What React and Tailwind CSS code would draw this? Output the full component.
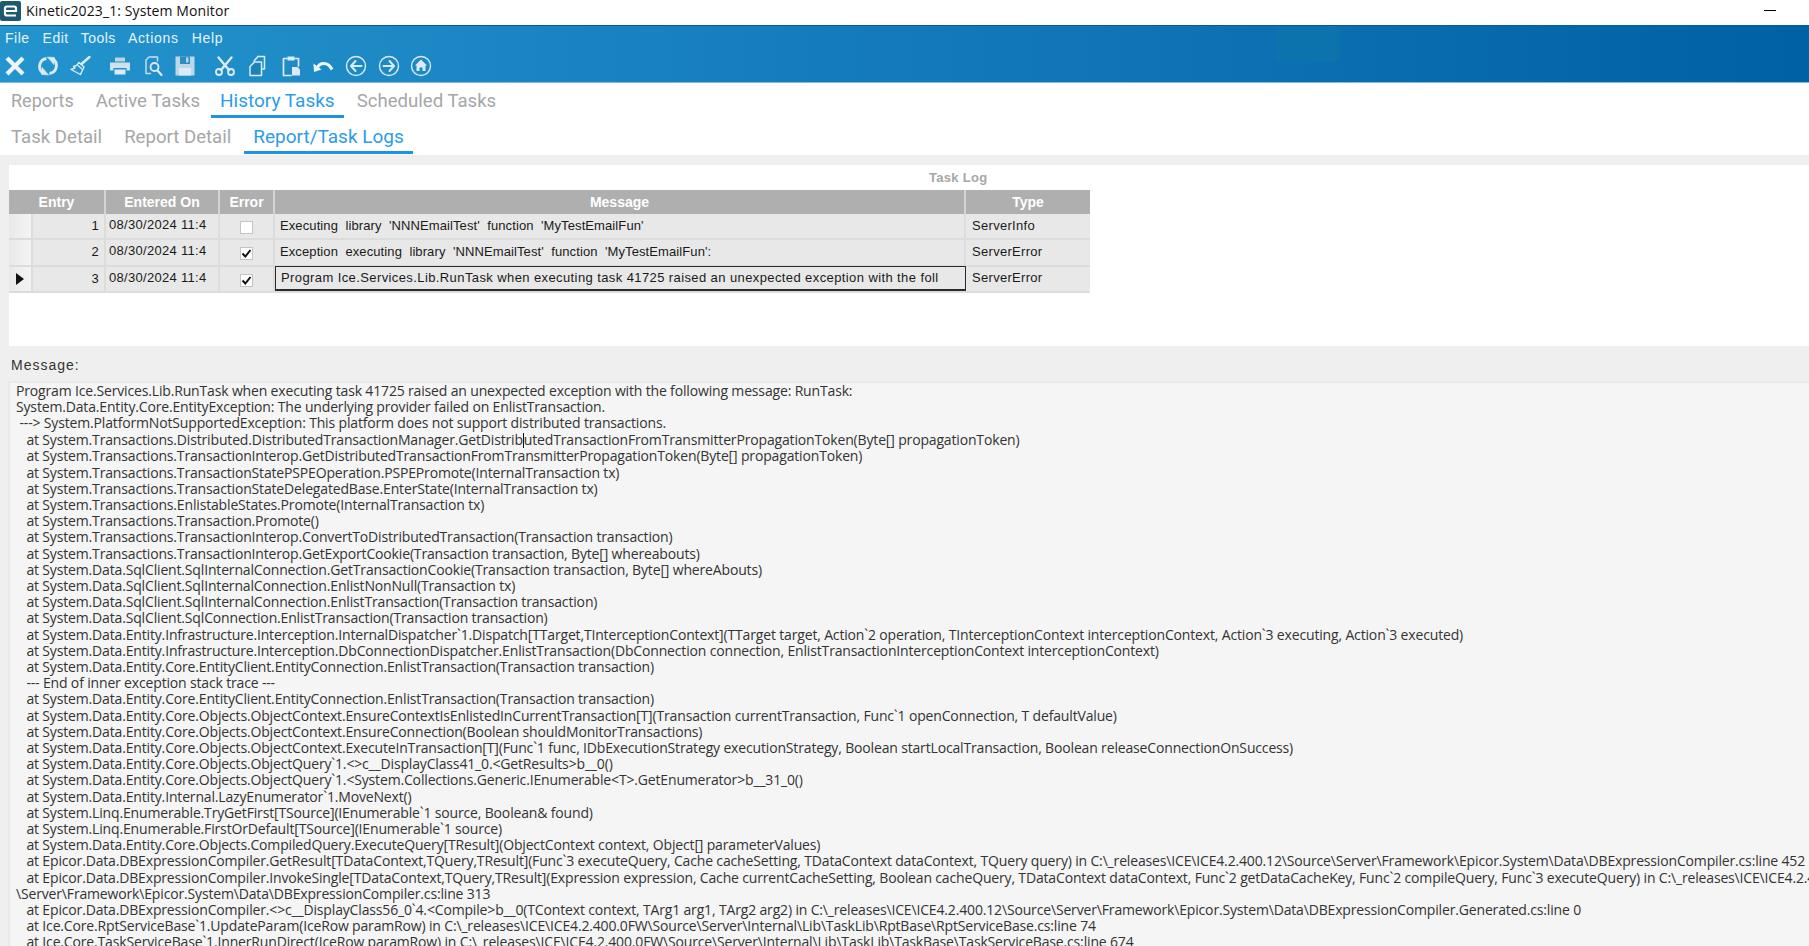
const LOG = [
"Program Ice.Services.Lib.RunTask when executing task 41725 raised an unexpected exception with the following message: RunTask:",
"System.Data.Entity.Core.EntityException: The underlying provider failed on EnlistTransaction.",
" ---> System.PlatformNotSupportedException: This platform does not support distributed transactions.",
"CARET",
"   at System.Transactions.TransactionInterop.GetDistributedTransactionFromTransmitterPropagationToken(Byte[] propagationToken)",
"   at System.Transactions.TransactionStatePSPEOperation.PSPEPromote(InternalTransaction tx)",
"   at System.Transactions.TransactionStateDelegatedBase.EnterState(InternalTransaction tx)",
"   at System.Transactions.EnlistableStates.Promote(InternalTransaction tx)",
"   at System.Transactions.Transaction.Promote()",
"   at System.Transactions.TransactionInterop.ConvertToDistributedTransaction(Transaction transaction)",
"   at System.Transactions.TransactionInterop.GetExportCookie(Transaction transaction, Byte[] whereabouts)",
"   at System.Data.SqlClient.SqlInternalConnection.GetTransactionCookie(Transaction transaction, Byte[] whereAbouts)",
"   at System.Data.SqlClient.SqlInternalConnection.EnlistNonNull(Transaction tx)",
"   at System.Data.SqlClient.SqlInternalConnection.EnlistTransaction(Transaction transaction)",
"   at System.Data.SqlClient.SqlConnection.EnlistTransaction(Transaction transaction)",
"   at System.Data.Entity.Infrastructure.Interception.InternalDispatcher`1.Dispatch[TTarget,TInterceptionContext](TTarget target, Action`2 operation, TInterceptionContext interceptionContext, Action`3 executing, Action`3 executed)",
"   at System.Data.Entity.Infrastructure.Interception.DbConnectionDispatcher.EnlistTransaction(DbConnection connection, EnlistTransactionInterceptionContext interceptionContext)",
"   at System.Data.Entity.Core.EntityClient.EntityConnection.EnlistTransaction(Transaction transaction)",
"   --- End of inner exception stack trace ---",
"   at System.Data.Entity.Core.EntityClient.EntityConnection.EnlistTransaction(Transaction transaction)",
"   at System.Data.Entity.Core.Objects.ObjectContext.EnsureContextIsEnlistedInCurrentTransaction[T](Transaction currentTransaction, Func`1 openConnection, T defaultValue)",
"   at System.Data.Entity.Core.Objects.ObjectContext.EnsureConnection(Boolean shouldMonitorTransactions)",
"   at System.Data.Entity.Core.Objects.ObjectContext.ExecuteInTransaction[T](Func`1 func, IDbExecutionStrategy executionStrategy, Boolean startLocalTransaction, Boolean releaseConnectionOnSuccess)",
"   at System.Data.Entity.Core.Objects.ObjectQuery`1.<>c__DisplayClass41_0.<GetResults>b__0()",
"   at System.Data.Entity.Core.Objects.ObjectQuery`1.<System.Collections.Generic.IEnumerable<T>.GetEnumerator>b__31_0()",
"   at System.Data.Entity.Internal.LazyEnumerator`1.MoveNext()",
"   at System.Linq.Enumerable.TryGetFirst[TSource](IEnumerable`1 source, Boolean& found)",
"   at System.Linq.Enumerable.FirstOrDefault[TSource](IEnumerable`1 source)",
"   at System.Data.Entity.Core.Objects.CompiledQuery.ExecuteQuery[TResult](ObjectContext context, Object[] parameterValues)",
"   at Epicor.Data.DBExpressionCompiler.GetResult[TDataContext,TQuery,TResult](Func`3 executeQuery, Cache cacheSetting, TDataContext dataContext, TQuery query) in C:\\_releases\\ICE\\ICE4.2.400.12\\Source\\Server\\Framework\\Epicor.System\\Data\\DBExpressionCompiler.cs:line 452",
"   at Epicor.Data.DBExpressionCompiler.InvokeSingle[TDataContext,TQuery,TResult](Expression expression, Cache currentCacheSetting, Boolean cacheQuery, TDataContext dataContext, Func`2 getDataCacheKey, Func`2 compileQuery, Func`3 executeQuery) in C:\\_releases\\ICE\\ICE4.2.400.12",
"\\Server\\Framework\\Epicor.System\\Data\\DBExpressionCompiler.cs:line 313",
"   at Epicor.Data.DBExpressionCompiler.<>c__DisplayClass56_0`4.<Compile>b__0(TContext context, TArg1 arg1, TArg2 arg2) in C:\\_releases\\ICE\\ICE4.2.400.12\\Source\\Server\\Framework\\Epicor.System\\Data\\DBExpressionCompiler.Generated.cs:line 0",
"   at Ice.Core.RptServiceBase`1.UpdateParam(IceRow paramRow) in C:\\_releases\\ICE\\ICE4.2.400.0FW\\Source\\Server\\Internal\\Lib\\TaskLib\\RptBase\\RptServiceBase.cs:line 74",
"   at Ice.Core.TaskServiceBase`1.InnerRunDirect(IceRow paramRow) in C:\\_releases\\ICE\\ICE4.2.400.0FW\\Source\\Server\\Internal\\Lib\\TaskLib\\TaskBase\\TaskServiceBase.cs:line 674",
];

const Ic = ({ children, className = "" }) => (
  <div className={`w-[30px] h-[24px] flex items-center justify-center shrink-0 ${className}`}>
    <svg width="24" height="24" viewBox="0 0 24 24" fill="none" stroke="#dcebf3" strokeWidth="2" strokeLinecap="round" strokeLinejoin="round">
      {children}
    </svg>
  </div>
);

function Toolbar() {
  return (
    <div className="flex items-center gap-[2.7px] h-[24px] mt-[6px]">
      <Ic><path d="M5.500 5.500 18.500 18.500M18.500 5.500 5.500 18.500" strokeWidth="4.200" stroke="#eef6fa" strokeLinecap="square" /></Ic>
      <Ic>
        <path d="M10.500 4.500A8 8 0 0 0 7 19" strokeWidth="2.800" strokeLinecap="butt" />
        <path d="M12.500 21 5.500 20.500 6 13.500z" fill="#dcebf3" strokeWidth="0.500" />
        <path d="M13.500 19.500A8 8 0 0 0 17 5" strokeWidth="2.800" strokeLinecap="butt" />
        <path d="M11.500 3 18.500 3.500 18 10.500z" fill="#dcebf3" strokeWidth="0.500" />
      </Ic>
      <Ic>
        <path d="M21.500 3 13.500 10" strokeWidth="2.400" />
        <path d="M11 8.500 16 13 12.500 20.500 3 15.500 7 14 5.500 12.500 8.500 11.500z" strokeWidth="1.400" />
        <path d="M10 11.500 14 15" strokeWidth="1.200" />
      </Ic>
      <Ic className="ml-[7px]">
        <path d="M7 3.500h10v4H7z" fill="#b9d5e5" strokeWidth="0" />
        <path d="M2 8.500h20v8h-3.500v-2.500h-13v2.500h-3.500z" fill="#cfe2ec" strokeWidth="0" />
        <path d="M6.500 15.500h11v5h-11z" fill="#dcebf3" strokeWidth="0" />
      </Ic>
      <Ic>
        <path d="M13 3H8L5 6v13.500H9.500" strokeWidth="1.500" stroke="#c6dce8" />
        <path d="M13 3h3.500V7" strokeWidth="1.500" stroke="#c6dce8" />
        <circle cx="13.500" cy="13" r="4" strokeWidth="1.800" />
        <path d="M16.500 16.500 20.500 21" strokeWidth="2.300" />
      </Ic>
      <Ic>
        <path d="M2.500 2.500h19v19h-19z" fill="#bcd7e6" strokeWidth="0" />
        <path d="M7 2.500h10v7.500H7z" fill="#2a8cc0" strokeWidth="0" />
        <path d="M13 3.500h2.500v5H13z" fill="#bcd7e6" strokeWidth="0" />
        <path d="M6 14h12v7.500H6z" fill="#dcebf3" strokeWidth="0" />
      </Ic>
      <Ic className="ml-[7px]">
        <circle cx="6" cy="18" r="3" strokeWidth="1.800" />
        <circle cx="18" cy="18" r="3" strokeWidth="1.800" />
        <path d="M8 16 18.500 3.500M16 16 5.500 3.500" strokeWidth="2.400" />
      </Ic>
      <Ic>
        <path d="M12 2.500h6.500V15H15.500M12 2.500 8 7" strokeWidth="1.500" />
        <path d="M8.500 8 4 12.500V21.500H15.500V8z" strokeWidth="1.500" fill="#1b83ba" />
      </Ic>
      <Ic>
        <path d="M8 4.500H4.500V21.500H12M16 4.500h3.500V12" strokeWidth="1.700" />
        <path d="M8.500 2.500h7v4h-7z" fill="#dcebf3" strokeWidth="0" />
        <path d="M13 13h5.500l2.500 2.500V21.500H13z" fill="#dcebf3" strokeWidth="0" />
      </Ic>
      <Ic>
        <path d="M6 14.500C8.500 8 17 7.500 21 15.500" strokeWidth="3" strokeLinecap="butt" stroke="#eef6fa" />
        <path d="M2.500 9.500 3 18 10.500 15.500z" fill="#eef6fa" strokeWidth="0" />
      </Ic>
      <Ic>
        <circle cx="12" cy="12" r="9.500" strokeWidth="1.400" />
        <path d="M11.500 7 7 12l4.500 5M7.500 12H17.500" strokeWidth="2" />
      </Ic>
      <Ic>
        <circle cx="12" cy="12" r="9.500" strokeWidth="1.400" />
        <path d="M12.500 7 17 12l-4.500 5M16.500 12H6.500" strokeWidth="2" />
      </Ic>
      <Ic>
        <circle cx="12" cy="12" r="9.500" strokeWidth="1.400" />
        <path d="M12 5.500 18 11.500H16.500V17H13.500V13.500H10.500V17H7.500V11.500H6z" fill="#dcebf3" strokeWidth="0" />
      </Ic>
    </div>
  );
}

const Tab = ({ children, active, size = "text-[18.600px] pt-[7px]", cls = "" }) => (
  <div className={`px-[9px] h-[36px] flex items-center border-b-[3px] whitespace-nowrap font-['Roboto',sans-serif] ${size} ${active ? "text-[#2c9cea] border-[#1d93e6]" : "text-[#a6a6a6] border-transparent"} ${cls}`}>
    {children}
  </div>
);

const Check = ({ on }) => (
  <div className="w-[13px] h-[13px] bg-white border border-[#c4c4c4] flex items-center justify-center mt-[2px]">
    {on && (
      <svg width="11" height="11" viewBox="0 0 11 11"><path d="M1.500 5.500 4.300 8.500 9.500 2" fill="none" stroke="#111" strokeWidth="2" /></svg>
    )}
  </div>
);

const rows = [
  { n: 1, on: false, msg: "Executing  library  'NNNEmailTest'  function  'MyTestEmailFun'", type: "ServerInfo", h: "h-[26px]" },
  { n: 2, on: true, msg: "Exception  executing  library  'NNNEmailTest'  function  'MyTestEmailFun':", type: "ServerError", h: "h-[27px]" },
  { n: 3, on: true, msg: "Program Ice.Services.Lib.RunTask when executing task 41725 raised an unexpected exception with the foll", type: "ServerError", h: "h-[26px]", sel: true },
];

function TaskGrid() {
  return (
    <div className="w-[1081px] text-[13px] font-['Liberation_Sans',sans-serif]">
      <div className="flex h-[24px] bg-[#afafaf] text-white font-bold text-[14px] leading-[24px] text-center">
        <div className="w-[97px] border-r-2 border-[#d4d4d4]">Entry</div>
        <div className="w-[114px] border-r-2 border-[#d4d4d4]">Entered On</div>
        <div className="w-[55px] border-r-2 border-[#d4d4d4]">Error</div>
        <div className="w-[691px] border-r-2 border-[#d4d4d4]">Message</div>
        <div className="w-[124px]">Type</div>
      </div>
      {rows.map((r) => (
        <div key={r.n} className={`flex ${r.h} bg-[#e8e8e8] border-b-2 border-[#dcdcdc] text-[#1a1a1a] tracking-[0.3px]`}>
          <div className="w-[24px] border-r-2 border-[#dcdcdc] bg-linear-to-r from-[#e9e9e9] to-[#f4f4f4] flex items-center justify-center">
            {r.sel && <svg width="8" height="12" viewBox="0 0 8 12"><path d="M0 0 8 6 0 12z" fill="#111" /></svg>}
          </div>
          <div className="w-[73px] border-r-2 border-[#dcdcdc] text-right pr-[5px] pt-[2px]">{r.n}</div>
          <div className="w-[114px] border-r-2 border-[#dcdcdc] pl-[3px] pt-[1px] whitespace-nowrap">08/30/2024 11:4</div>
          <div className="w-[55px] border-r-2 border-[#dcdcdc] flex justify-center items-center"><Check on={r.on} /></div>
          <div className={`w-[691px] pl-[5px] whitespace-pre overflow-hidden ${r.sel ? "border border-b-2 border-[#2a2a2a] -mt-px pt-[1px] tracking-[0.4px]" : "border-r-2 border-[#dcdcdc] pt-[2px] tracking-[0.1px]"}`}>{r.msg}</div>
          <div className={`w-[124px] pl-[6px] ${r.sel ? "pt-[1px]" : "pt-[2px]"}`}>{r.type}</div>
        </div>
      ))}
    </div>
  );
}

export default function App() {
  return (
    <div className="w-[1809px] h-[946px] overflow-hidden flex flex-col bg-[#efefef] font-['Open_Sans',sans-serif]">
      <div className="h-[25px] bg-white flex items-center shrink-0">
        <svg width="21" height="20" viewBox="0 0 21 20" className="-mt-[3px]">
          <rect width="21" height="20" rx="2" fill="#1c5a72" />
          <path d="M5 10h11V7.500c0-1-.8-2-2-2H7c-1.200 0-2 1-2 2v5c0 1.200.8 2 2 2h9" fill="none" stroke="#fff" strokeWidth="2.200" />
        </svg>
        <span className="ml-[5px] text-[14px] text-[#111] -mt-[4px] tracking-[0.1px]">Kinetic2023_1: System Monitor</span>
        <div className="ml-auto mr-[33px] w-[12px] h-px bg-black -mt-[5px]" />
      </div>

      <div className="relative h-[58px] shrink-0 bg-linear-to-r from-[#2394cd] via-[#0f72b5] via-65% to-[#0061a4] border-t border-[#0a5c8c] border-b border-b-[#7fbde0]">
        <div className="absolute left-[1277px] top-0 w-[63px] h-[35px] bg-[#0e78a8]/50" />
        <div className="relative flex text-[14px] text-[#e6f3fa] font-['Liberation_Sans',sans-serif] tracking-[0.5px] h-[22px] items-center pt-[2px]">
          <span className="ml-[5px]">File</span>
          <span className="ml-[13px]">Edit</span>
          <span className="ml-[12px]">Tools</span>
          <span className="ml-[12px] tracking-[0.7px]">Actions</span>
          <span className="ml-[13px] tracking-[0.7px]">Help</span>
        </div>
        <Toolbar />
      </div>

      <div className="h-[72px] bg-white shrink-0 pl-[2px]">
        <div className="flex gap-[4px] -mt-px">
          <Tab size="text-[18px] pt-[4px]">Reports</Tab>
          <Tab>Active Tasks</Tab>
          <Tab active size="text-[19px] pt-[5px]" cls="-ml-[2px]">History Tasks</Tab>
          <Tab>Scheduled Tasks</Tab>
        </div>
        <div className="flex gap-[4px]">
          <Tab>Task Detail</Tab>
          <Tab>Report Detail</Tab>
          <Tab active size="text-[19px] pt-[5px]">Report/Task Logs</Tab>
        </div>
      </div>

      <div className="h-[10px] shrink-0" />

      <div className="h-[181px] ml-[9px] bg-white shrink-0">
        <div className="h-[25px] pl-[920px] pt-[3px] text-[13px] font-bold text-[#a6a6a6] font-['Liberation_Sans',sans-serif] tracking-[0.3px]">Task Log</div>
        <TaskGrid />
      </div>

      <div className="h-[35px] shrink-0 pl-[11px] pt-[9px] text-[14px] leading-[20px] text-[#333] font-['Liberation_Sans',sans-serif] tracking-[1px]">Message:</div>

      <div className="flex-1 ml-[8px] bg-[#f5f5f5] border-t-2 border-l-2 border-[#e9e9e9] pl-[6px] overflow-hidden text-[14px] leading-[16.200px] text-[#333] whitespace-pre tracking-[-0.16px]">
        {LOG.map((l, i) =>
          l === "CARET" ? (
            <div key={i}>
              {"   at System.Transactions.Distributed.DistributedTransactionManager.GetDistrib"}
              <span className="inline-block w-px h-[15px] bg-[#111] align-middle" />
              {"utedTransactionFromTransmitterPropagationToken(Byte[] propagationToken)"}
            </div>
          ) : (
            <div key={i}>{l}</div>
          )
        )}
      </div>
    </div>
  );
}
